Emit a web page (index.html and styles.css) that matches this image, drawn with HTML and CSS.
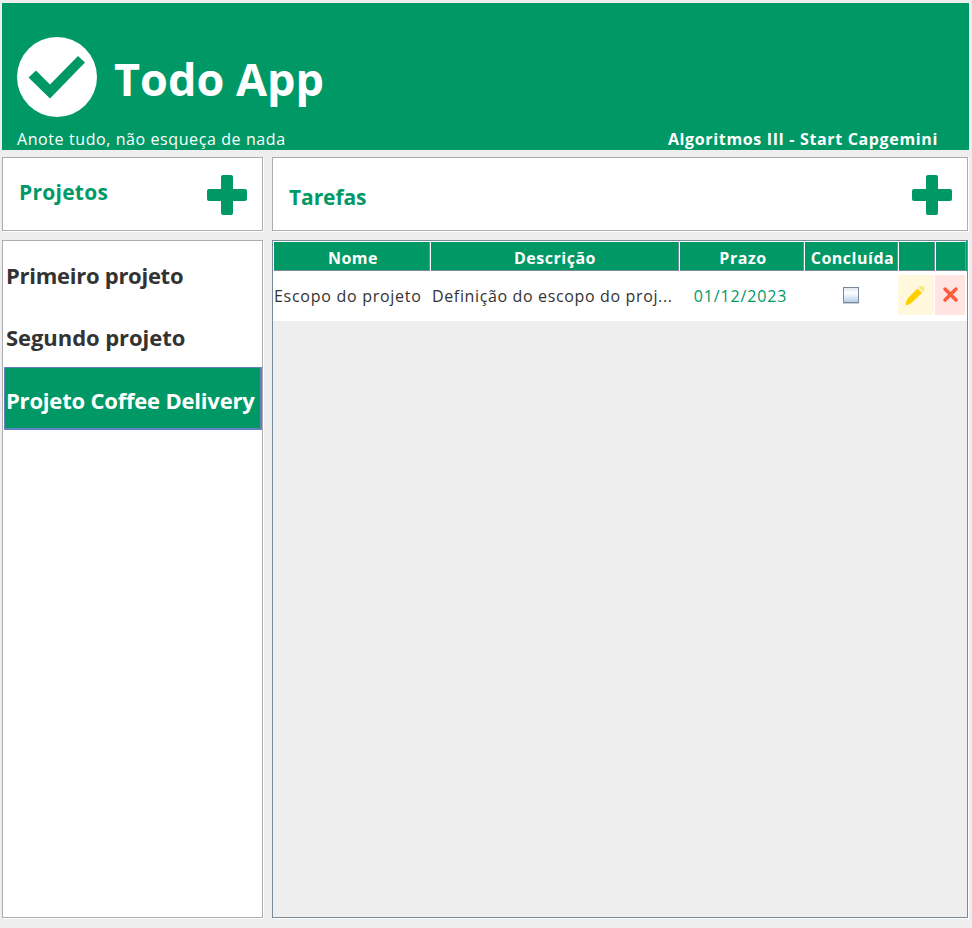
FILE: index.html
```html
<!DOCTYPE html>
<html lang="pt-BR">
<head>
<meta charset="utf-8">
<title>Todo App</title>
<link rel="stylesheet" href="styles.css">
</head>
<body>
<header class="banner">
  <div class="brand">
    <svg class="logo" width="80" height="80" viewBox="0 0 80 80"><circle cx="40" cy="40" r="40" fill="#fff"/><path d="M11.500 40.500L19 33.500 33 47.500 61 19l7 6.500L33 61.500z" fill="#009966"/></svg>
    <h1 class="title"><span>Todo App</span></h1>
  </div>
  <div class="subline">
    <span class="tagline">Anote tudo, não esqueça de nada</span>
    <span class="course">Algoritmos III - Start Capgemini</span>
  </div>
</header>
<main class="layout">
  <section class="panel projects-head">
    <h2 class="heading"><span>Projetos</span></h2>
    <svg class="plus" width="40" height="40" viewBox="0 0 40 40"><path d="M16 0h8a2 2 0 0 1 2 2v12h12a2 2 0 0 1 2 2v8a2 2 0 0 1-2 2H26v12a2 2 0 0 1-2 2h-8a2 2 0 0 1-2-2V26H2a2 2 0 0 1-2-2v-8a2 2 0 0 1 2-2h12V2a2 2 0 0 1 2-2z" fill="#009966"/></svg>
  </section>
  <section class="panel tasks-head">
    <h2 class="heading"><span>Tarefas</span></h2>
    <svg class="plus" width="40" height="40" viewBox="0 0 40 40"><path d="M16 0h8a2 2 0 0 1 2 2v12h12a2 2 0 0 1 2 2v8a2 2 0 0 1-2 2H26v12a2 2 0 0 1-2 2h-8a2 2 0 0 1-2-2V26H2a2 2 0 0 1-2-2v-8a2 2 0 0 1 2-2h12V2a2 2 0 0 1 2-2z" fill="#009966"/></svg>
  </section>
  <ul class="panel list">
    <li class="project"><span>Primeiro projeto</span></li>
    <li class="project second"><span>Segundo projeto</span></li>
    <li class="project selected"><span>Projeto Coffee Delivery</span></li>
  </ul>
  <section class="panel tasks">
    <div class="row head">
      <div class="th">Nome</div><div class="th">Descrição</div><div class="th">Prazo</div><div class="th">Concluída</div><div class="th"></div><div class="th"></div>
    </div>
    <div class="row body">
      <div class="td name">Escopo do projeto</div>
      <div class="td desc">Definição do escopo do proj...</div>
      <div class="td date">01/12/2023</div>
      <div class="td check"><span class="box"></span></div>
      <div class="td edit"><svg width="36" height="40" viewBox="0 0 36 40"><path d="M8 30v-3l2-4L19.500 13.500l4.500 4.500L14 27.500l-4 2.500z" fill="#ffd000"/><path d="M20.500 12.500l1.500-1.500h3l1.500 1.500v3L25 17z" fill="#ffe680"/></svg></div>
      <div class="td remove"><svg width="30" height="40" viewBox="0 0 30 40"><path d="M10 14L21 25M21 14L10 25" stroke="#ff5a3c" stroke-width="3.500" stroke-linecap="round" fill="none"/></svg></div>
    </div>
  </section>
</main>
</body>
</html>
```

FILE: styles.css
```css
* { box-sizing: border-box; }
body { margin: 0; padding: 3px 3px 0 2px; height: 928px; overflow: hidden; background: #eee; font-family: "Open Sans", "Noto Sans", sans-serif; color: #333; }
h1, h2, ul { margin: 0; padding: 0; }
.banner { height: 147px; padding: 34px 31px 0 15px; background: #009966; color: #fff; }
.brand { display: flex; height: 92px; gap: 17px; }
.title { font-size: 45px; line-height: 60px; padding-top: 12px; white-space: nowrap; }
.subline { display: flex; justify-content: space-between; font-size: 16px; line-height: 20px; white-space: nowrap; }
.tagline { letter-spacing: .59px; }
.course { font-weight: 700; letter-spacing: .65px; }
.layout { display: grid; grid-template-columns: 261px 696px; grid-template-rows: 74px 678px; gap: 9px; padding-top: 7px; }
.panel { background: #fff; border: 1px solid #adadad; box-shadow: 1px 1px 0 #fff; }
.projects-head, .tasks-head { display: flex; justify-content: space-between; padding: 17px 15px 0 16px; }
.heading { color: #009966; font-size: 21px; line-height: 28px; padding-top: 3px; letter-spacing: .25px; }
.tasks-head .heading { padding-top: 8px; letter-spacing: -.1px; }
.list { list-style: none; padding: 1px 0 0 1px; }
.project { height: 62px; padding: 17px 0 0 2px; font-size: 22px; font-weight: 700; line-height: 32px; letter-spacing: -.27px; white-space: nowrap; }
.second { height: 63px; letter-spacing: -.06px; }
.selected { height: 63px; padding: 16px 0 0 1px; border: solid #6382bf; border-width: 1px 2px 2px 1px; background: #009966; color: #fff; letter-spacing: -.2px; }
.tasks { background: #eee; border-color: #7a8a99; }
.row { display: grid; grid-template-columns: 157px 249px 125px 94px 37px 31px 1px; }
.head { background: #009966; height: 30px; }
.th { border: solid #fff; border-width: 1px 0 0 1px; box-shadow: inset -1px -1px 0 #7a8a99; height: 30px; padding-left: 2px; color: #fff; font-size: 16px; font-weight: 700; line-height: 32px; letter-spacing: .52px; text-align: center; white-space: nowrap; }
.th:nth-child(2) { padding-left: 0; }
.body { background: #fff; height: 50px; }
.td { height: 50px; line-height: 50px; font-size: 16px; letter-spacing: .72px; white-space: nowrap; padding-left: 1px; }
.desc { padding-left: 2px; letter-spacing: .64px; }
.date { color: #009966; text-align: center; letter-spacing: .88px; padding: 0 2px 0 0; }
.check { display: flex; align-items: center; justify-content: center; padding: 0 1px 2px 0; }
.box { width: 16px; height: 16px; border: 1px solid #7a8a99; background: linear-gradient(#dde8f3, #fff 35%, #b8cfe5); box-shadow: 0 1px 0 #ccd; }
.edit, .remove { height: 40px; margin-top: 4px; padding: 0; line-height: 0; }
.edit { width: 36px; background: #fff8dc; border-radius: 3px; }
.remove { width: 30px; background: #ffe4e1; }
```
